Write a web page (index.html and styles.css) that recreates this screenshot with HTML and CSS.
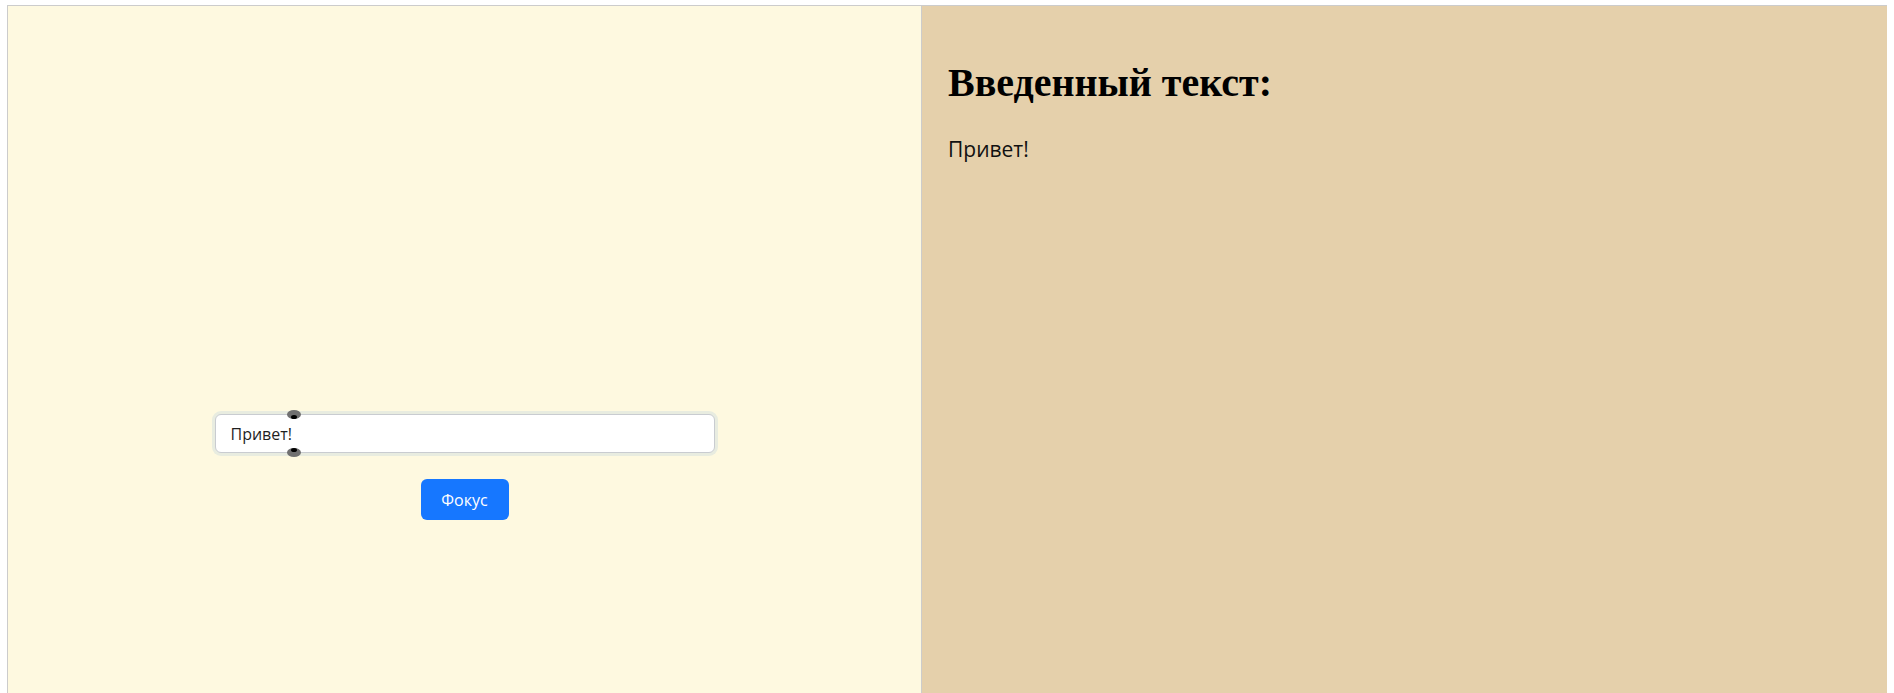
FILE: index.html
```html
<!DOCTYPE html>
<html lang="ru">
<head>
<meta charset="utf-8">
<title>Фокус</title>
<link rel="stylesheet" href="styles.css">
</head>
<body>
<div class="app">
  <section class="left">
    <div class="form">
      <div class="field">
        <input class="text-input" type="text" value="Привет!">
        <span class="handle handle-top"></span>
        <span class="handle handle-bottom"></span>
      </div>
      <button class="btn" type="button">Фокус</button>
    </div>
  </section>
  <section class="right">
    <h1 class="title">Введенный текст:</h1>
    <p class="output">Привет!</p>
  </section>
</div>
</body>
</html>
```
FILE: styles.css
```css
html, body {
  margin: 0;
  padding: 0;
  background: #ffffff;
  overflow: hidden;
}
.app {
  margin: 5px 0 0 7px;
  width: 1879px;
  height: 720px;
  display: flex;
  border-top: 1px solid #cccccc;
  border-left: 1px solid #cccccc;
}
.left {
  width: 914px;
  background: #fef9e0;
  border-right: 1px solid #cccccc;
  display: flex;
  justify-content: center;
  padding-top: 408px;
  box-sizing: border-box;
}
.form {
  display: flex;
  flex-direction: column;
  align-items: center;
  gap: 26px;
}
.field {
  position: relative;
}
.text-input {
  width: 500px;
  height: 39px;
  box-sizing: border-box;
  border: 1px solid #c9ccd0;
  border-radius: 6px;
  padding: 0 15px;
  font-family: "Open Sans", "Noto Sans", sans-serif;
  font-size: 16px;
  color: #1f1f1f;
  background: #ffffff;
  box-shadow: 0 0 0 3px #e8ece0;
  outline: none;
}
.handle {
  position: absolute;
  left: 72px;
  width: 14px;
  height: 9px;
  background: #707070;
  border-radius: 50%;
}
.handle::after {
  content: "";
  position: absolute;
  left: 4px;
  width: 6px;
  height: 4px;
  background: #000;
  border-radius: 50%;
}
.handle-top {
  top: -4px;
}
.handle-top::after {
  bottom: 0;
}
.handle-bottom {
  bottom: -4px;
}
.handle-bottom::after {
  top: 0;
}
.btn {
  width: 88px;
  height: 41px;
  border: none;
  border-radius: 6px;
  background: #1677ff;
  color: #ffffff;
  font-family: "Open Sans", "Noto Sans", sans-serif;
  font-size: 16px;
  cursor: pointer;
}
.right {
  flex: 1;
  background: #e5d0ab;
  padding: 0 26px;
}
.title {
  font-family: "Liberation Serif", "Times New Roman", serif;
  font-weight: bold;
  font-size: 40px;
  margin: 53px 0 0;
  color: #000;
}
.output {
  font-family: "Open Sans", "Noto Sans", sans-serif;
  font-size: 21px;
  margin: 29px 0 0;
  color: #111;
}
```
